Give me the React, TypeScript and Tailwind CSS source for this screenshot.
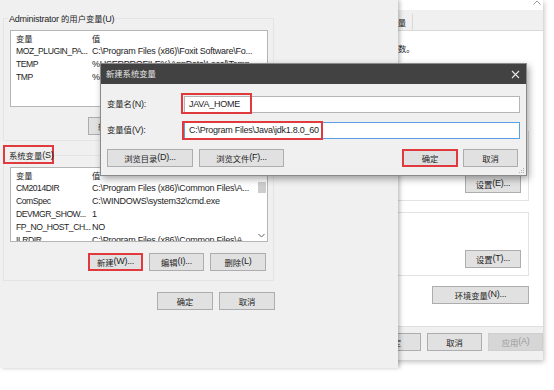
import React from "react";

function T({ s }: { s: string }) {
  const parts = s.split(/([\u3000-\u9fff\uff00-\uffef]+)/);
  return (
    <>
      {parts.map((p, i) =>
        /[\u3000-\u9fff\uff00-\uffef]/.test(p) ? (
          <span key={i} className="font-['Noto_Sans_CJK_SC',sans-serif] text-[8.3px] tracking-normal">
            {p}
          </span>
        ) : (
          <React.Fragment key={i}>{p}</React.Fragment>
        )
      )}
    </>
  );
}

function Btn({ s, className = "", disabled = false }: { s: string; className?: string; disabled?: boolean }) {
  return (
    <div
      className={`flex h-[18px] items-center justify-center whitespace-nowrap border ${
        disabled ? "border-[#cfcfcf] bg-[#d6d6d6] text-[#9a9a9a]" : "border-[#adadad] bg-[#e1e1e1] text-[#1e1e1e]"
      } ${className}`}
    >
      <T s={s} />
    </div>
  );
}

type Row = [string, string];

function ListBox({ rows, h, scroll = false }: { rows: Row[]; h: string; scroll?: boolean }) {
  return (
    <div className={`relative ml-[6px] w-[258px] ${h} overflow-hidden border border-[#b5b5b5] bg-white`}>
      <div className="flex h-[14px] items-center leading-[14px]">
        <div className="w-[81px] shrink-0 pl-[5px]">
          <T s="变量" />
        </div>
        <div>
          <T s="值" />
        </div>
      </div>
      {rows.map(([n, v], i) => (
        <div key={i} className="flex h-[13px] items-center whitespace-nowrap leading-[13px]">
          <div className="w-[81px] shrink-0 overflow-hidden pl-[5px] text-[8.6px] tracking-[-0.45px]">{n}</div>
          <div>{v}</div>
        </div>
      ))}
      {scroll && (
        <div className="absolute right-0 top-0 flex h-full w-[11px] flex-col items-center bg-white">
          <div className="mt-[14px] h-[11px] w-[8px] bg-[#cdcdcd]" />
          <div className="flex-1" />
          <svg width="7" height="5" viewBox="0 0 7 5" className="mb-[3px]">
            <path d="M0.5 1 L3.5 4 L6.5 1" stroke="#606060" strokeWidth="1" fill="none" />
          </svg>
        </div>
      )}
    </div>
  );
}

export default function App() {
  const userRows: Row[] = [
    ["MOZ_PLUGIN_PA...", "C:\\Program Files (x86)\\Foxit Software\\Fo..."],
    ["TEMP", "%USERPROFILE%\\AppData\\Local\\Temp"],
    ["TMP", "%USERPROFILE%\\AppData\\Local\\Temp"],
  ];
  const sysRows: Row[] = [
    ["CM2014DIR", "C:\\Program Files (x86)\\Common Files\\A..."],
    ["ComSpec", "C:\\WINDOWS\\system32\\cmd.exe"],
    ["DEVMGR_SHOW...", "1"],
    ["FP_NO_HOST_CH...", "NO"],
    ["ILRDIR", "C:\\Program Files (x86)\\Common Files\\A..."],
  ];

  return (
    <div className="relative h-[390px] w-[554px] overflow-hidden bg-white font-['Liberation_Sans','Noto_Sans_CJK_SC',sans-serif] text-[9px] tracking-[-0.25px] text-[#1e1e1e]">
      {/* Back window: System properties */}
      <div className="absolute left-[390px] top-0 flex h-[360px] w-[153px] flex-col bg-white shadow-[1px_2px_5px_rgba(0,0,0,0.25)]">
        <div className="relative h-[10px]">
          <svg width="8" height="5" viewBox="0 0 8 5" className="absolute right-[2px] top-0">
            <path d="M0.5 4.5 L4 1 L7.5 4.5" stroke="#9a9a9a" strokeWidth="1" fill="none" />
          </svg>
        </div>
        <div className="flex h-[21px] items-end border-b border-[#d9d9d9] bg-[#f0f0f0]">
          <div className="flex h-[16px] w-[23px] items-center justify-end border-r border-[#d9d9d9] pr-[6px]">
            <T s="量" />
          </div>
        </div>
        <div className="ml-[8px] mt-[10px] leading-[14px]">
          <T s="数。" />
        </div>
        <div className="mr-[14px] mt-[75px] flex h-[70px] flex-col items-end justify-end border-b border-r border-[#e3e3e3] pb-[7px]">
          <Btn s="设置(E)..." className="mr-[7px] w-[56px]" />
        </div>
        <div className="mr-[14px] mt-[11px] flex h-[64px] flex-col items-end justify-end border-b border-r border-t border-[#e3e3e3] pb-[7px]">
          <Btn s="设置(T)..." className="mr-[7px] w-[56px]" />
        </div>
        <div className="mr-[14px] mt-[10px] flex justify-end">
          <Btn s="环境变量(N)..." className="w-[97px]" />
        </div>
        <div className="mt-[22px] flex flex-1 gap-[6px] border-t border-[#dfdfdf] bg-[#f0f0f0] pt-[6px]">
          <Btn s="确定" className="ml-[-25px] w-[56px]" />
          <Btn s="取消" className="w-[56px]" />
          <Btn s="应用(A)" className="w-[55px]" disabled />
        </div>
      </div>

      {/* Environment variables window */}
      <div className="absolute left-0 top-0 flex h-[368px] w-[398px] flex-col bg-[#f0f0f0] shadow-[2px_0_4px_rgba(0,0,0,0.25)]">
        <div className="ml-[3px] mt-[18px] h-[123px] w-[271px] border border-[#e4e4e4]">
          <div className="-mt-[8px] ml-[4px] h-[14px] w-fit whitespace-nowrap bg-[#f0f0f0] px-[1px] leading-[14px]">
            <T s="Administrator 的用户变量(U)" />
          </div>
          <div className="mt-[5px]">
            <ListBox rows={userRows} h="h-[77px]" />
          </div>
          <div className="ml-[84px] mt-[10px] flex gap-[6px]">
            <Btn s="新建(N)..." className="w-[55px]" />
            <Btn s="编辑(E)..." className="w-[55px]" />
            <Btn s="删除(D)" className="w-[55px]" />
          </div>
        </div>
        <div className="ml-[3px] mt-[14px] h-[126px] w-[271px] border border-[#e4e4e4]">
          <div className="-ml-[1px] -mt-[11px] flex h-[19px] w-[51px] items-center whitespace-nowrap border-2 border-[#e0393e] bg-[#f0f0f0] pl-[4px] leading-[14px]">
            <T s="系统变量(S)" />
          </div>
          <div className="mt-[3px]">
            <ListBox rows={sysRows} h="h-[75px]" scroll />
          </div>
          <div className="ml-[84px] mt-[11px] flex gap-[6px]">
            <Btn s="新建(W)..." className="w-[55px] border-2 border-[#e0393e]" />
            <Btn s="编辑(I)..." className="w-[55px]" />
            <Btn s="删除(L)" className="w-[56px]" />
          </div>
        </div>
        <div className="ml-[157px] mt-[11px] flex gap-[6px]">
          <Btn s="确定" className="w-[56px]" />
          <Btn s="取消" className="w-[56px]" />
        </div>
      </div>

      {/* New system variable dialog */}
      <div className="absolute left-[100px] top-[63px] flex h-[113px] w-[427px] flex-col border border-[#8a8a8a] bg-[#f0f0f0] shadow-[2px_3px_7px_rgba(0,0,0,0.35)]">
        <div className="flex h-[20px] shrink-0 items-center justify-between bg-[#424242] pl-[5px] pr-[6px] text-[#e6e6e6]">
          <span>
            <T s="新建系统变量" />
          </span>
          <svg width="9" height="9" viewBox="0 0 9 9">
            <path d="M1 1 L8 8 M8 1 L1 8" stroke="#e6e6e6" strokeWidth="1.1" />
          </svg>
        </div>
        <div className="mt-[12px] flex items-center pl-[6px]">
          <div className="w-[77px] whitespace-nowrap">
            <T s="变量名(N):" />
          </div>
          <div className="relative flex h-[17px] w-[336px] items-center border border-[#b5b5b5] bg-white pl-[4px]">
            JAVA_HOME
            <div className="absolute -left-[4px] -top-[4px] h-[21px] w-[71px] border-2 border-[#e0393e]" />
          </div>
        </div>
        <div className="mt-[9px] flex items-center pl-[6px]">
          <div className="w-[77px] whitespace-nowrap">
            <T s="变量值(V):" />
          </div>
          <div className="relative flex h-[17px] w-[336px] items-center whitespace-nowrap border border-[#5aa0e6] bg-white pl-[4px]">
            C:\Program Files\Java\jdk1.8.0_60
            <div className="absolute -left-[3px] -top-[2px] h-[19px] w-[141px] border-2 border-[#e0393e]" />
          </div>
        </div>
        <div className="mt-[10px] flex pl-[6px] pr-[8px]">
          <Btn s="浏览目录(D)..." className="w-[86px]" />
          <Btn s="浏览文件(F)..." className="ml-[6px] w-[85px]" />
          <div className="flex-1" />
          <Btn s="确定" className="w-[56px] border-2 border-[#e0393e]" />
          <Btn s="取消" className="ml-[5px] w-[55px]" />
        </div>
        <svg width="6" height="6" viewBox="0 0 6 6" className="absolute bottom-[1px] right-[1px]">
          <rect x="4" y="0" width="1" height="1" fill="#b0b0b0" />
          <rect x="2" y="2" width="1" height="1" fill="#b0b0b0" />
          <rect x="4" y="2" width="1" height="1" fill="#b0b0b0" />
          <rect x="0" y="4" width="1" height="1" fill="#b0b0b0" />
          <rect x="2" y="4" width="1" height="1" fill="#b0b0b0" />
          <rect x="4" y="4" width="1" height="1" fill="#b0b0b0" />
        </svg>
      </div>
    </div>
  );
}
